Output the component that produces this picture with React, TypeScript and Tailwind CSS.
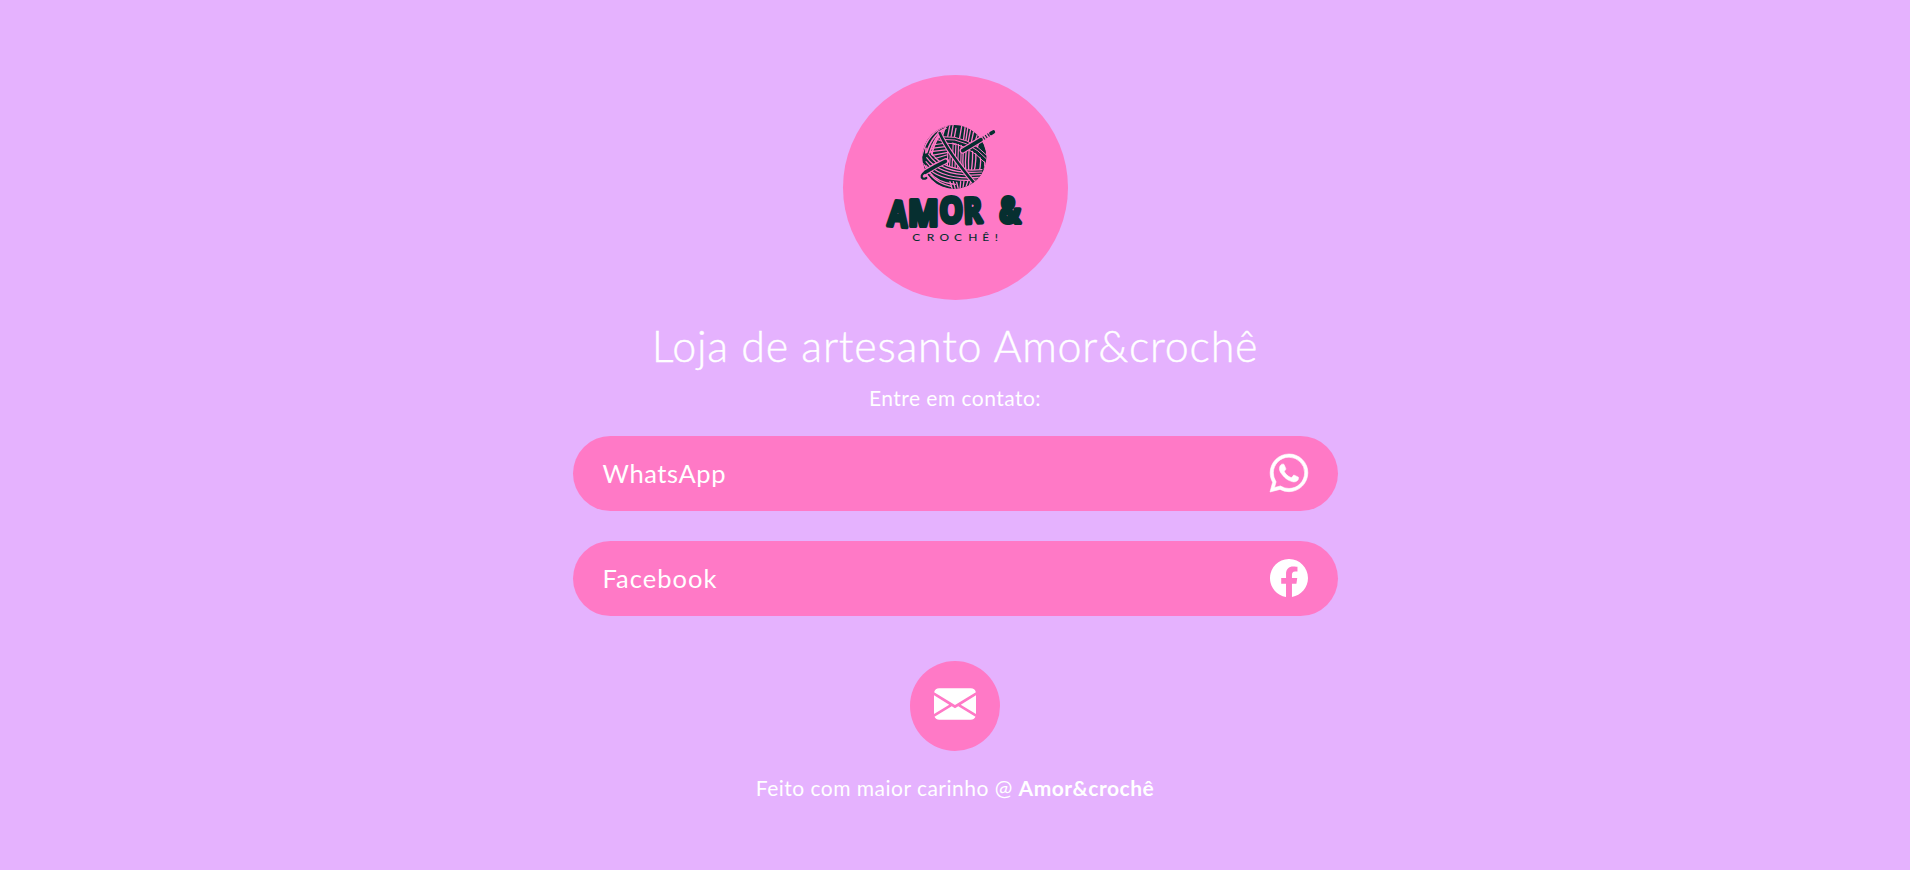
import React from "react";
import { BsEnvelopeFill, BsFacebook, BsWhatsapp } from "react-icons/bs";

const INK = "#062f30";
const PINK = "#ff79c6";

function Strands({ paths, color, width }: { paths: string[]; color: string; width: number }) {
  return (
    <g fill="none" stroke={color} strokeWidth={width} strokeLinecap="round">
      {paths.map((d) => (
        <path key={d} d={d} />
      ))}
    </g>
  );
}

function Logo() {
  return (
    <svg className="block size-[225px]" viewBox="0 0 225 225">
      <defs>
        <clipPath id="ball">
          <circle cx="163" cy="126" r="96" />
        </clipPath>
      </defs>
      <g transform="translate(57 40) scale(0.33333)">
        <g clipPath="url(#ball)">
          <circle cx="163" cy="126" r="97" fill={INK} />
          {/* vertical strands, top */}
          <Strands
            color={PINK}
            width={4}
            paths={[
              "M138 30 L128 62", "M150 28 L142 70", "M160 26 L152 72", "M186 28 L178 74",
              "M196 32 L190 78", "M204 34 L197 80", "M213 38 L204 82", "M222 44 L213 86",
              "M234 52 L222 90", "M244 62 L232 96", "M168 40 L162 72",
            ]}
          />
          {/* outer wraps, left */}
          <Strands
            color={PINK}
            width={5}
            paths={[
              "M142 32 Q84 48 66 120", "M138 40 Q92 58 74 134", "M130 48 Q98 68 80 146",
              "M122 58 Q98 84 90 150", "M66 90 Q60 140 90 176", "M78 100 Q74 140 98 166",
            ]}
          />
          {/* inner left fans */}
          <Strands
            color={PINK}
            width={3.5}
            paths={[
              "M96 90 L140 84", "M94 100 L142 94", "M92 110 L144 104", "M92 122 L144 112",
              "M94 134 L140 120", "M106 72 L132 80", "M112 64 L130 72",
            ]}
          />
          {/* centre strands */}
          <Strands
            color={PINK}
            width={3.5}
            paths={[
              "M144 92 L142 158", "M152 102 L148 162", "M160 74 L156 164", "M168 78 L165 160",
              "M176 78 L173 158", "M184 78 L182 162", "M148 72 L164 88",
            ]}
          />
          {/* right strands */}
          <Strands
            color={PINK}
            width={4}
            paths={[
              "M190 104 Q186 140 192 178", "M199 98 Q194 142 198 184", "M208 94 Q204 140 206 180",
              "M217 92 Q220 130 213 176", "M225 96 Q232 130 221 176",
              "M236 106 Q248 136 236 176", "M250 124 Q258 144 252 168",
            ]}
          />
          {/* upper right band */}
          <Strands color={INK} width={17} paths={["M130 74 Q200 68 262 136"]} />
          <Strands
            color={PINK}
            width={3}
            paths={["M128 65 Q204 60 266 126", "M130 73 Q202 68 264 136", "M134 84 Q196 80 258 146"]}
          />
          {/* lower wraps */}
          <Strands color={INK} width={34} paths={["M82 132 Q132 192 244 180"]} />
          <Strands
            color={PINK}
            width={3.5}
            paths={[
              "M92 110 Q130 174 246 164", "M86 118 Q128 181 246 171", "M80 128 Q124 188 244 179",
              "M78 140 Q122 197 240 187", "M78 152 Q118 204 234 195", "M84 166 Q112 204 166 208",
              "M92 180 Q116 206 152 214",
            ]}
          />
          {/* bottom strands */}
          <Strands
            color={PINK}
            width={4}
            paths={[
              "M150 200 L158 226", "M160 200 L167 226", "M170 202 L176 226", "M182 200 L180 226",
              "M192 198 L188 224", "M204 196 L196 222", "M214 194 L206 218",
            ]}
          />
          <Strands color={PINK} width={14} paths={["M119 54 Q144 112 224 206"]} />
          <Strands color={INK} width={7.5} paths={["M119 54 Q144 112 224 206"]} />
        </g>
        {/* crochet hook */}
        <Strands color={PINK} width={18} paths={["M188 107 L252 68", "M138 138 Q104 152 76 172"]} />
        <Strands color={INK} width={11} paths={["M188 107 L243 74", "M273 55 L280 51"]} />
        <g fill="none" stroke={INK} strokeWidth={11}>
          <path d="M250 70 L253 68 M257 65.500 L260 63.500 M264 61 L267 59" />
        </g>
        <Strands color={INK} width={11} paths={["M136 139 Q104 154 76 172"]} />
        <Strands color={INK} width={6.5} paths={["M76 171 Q58 182 69 191 Q74 192 79 189"]} />
      </g>
      <g
        fill={INK}
        stroke={INK}
        strokeWidth="4.2"
        strokeLinejoin="round"
        fontFamily="'Open Sans', sans-serif"
        fontWeight="700"
        fontSize="35"
      >
        <text transform="translate(44.5 150.5) scale(0.8 1) rotate(4)">A</text>
        <text transform="translate(65 150.5) scale(0.93 1)">M</text>
        <text transform="translate(96.5 148) scale(0.84 1)">O</text>
        <text transform="translate(121 148.5) scale(0.8 1) rotate(-3)">R</text>
        <text transform="translate(156.5 148) scale(0.8 1)">&amp;</text>
      </g>
      <text
        transform="scale(1.15 1)"
        x="60.3 72.8 84 96.6 109 121.200 132"
        y="165.8"
        fill={INK}
        fontFamily="Lato, sans-serif"
        fontSize="10.4"
        fontWeight="500"
      >
        CROCHÊ!
      </text>
    </svg>
  );
}

function LinkPill({ children, icon }: { children: React.ReactNode; icon: React.ReactNode }) {
  return (
    <a
      href="#"
      className="flex h-[75px] w-full items-center justify-between rounded-full bg-[#ff79c6] px-[30px] text-[25.5px]"
    >
      {children}
      {icon}
    </a>
  );
}

export default function App() {
  return (
    <main className="flex h-[870px] flex-col items-center bg-[#e5b2fe] pt-[75px] font-[Lato,sans-serif] text-white">
      <div className="size-[225px] shrink-0 rounded-full bg-[#ff79c6]">
        <Logo />
      </div>
      <h1 className="mt-[19px] text-[43px] leading-[54px] font-light tracking-[0.76px] whitespace-nowrap [-webkit-text-stroke:0.4px_white]">
        Loja de artesanto Amor&amp;crochê
      </h1>
      <p className="mt-[9px] text-[21px] leading-[32px] tracking-[0.47px]">Entre em contato:</p>
      <nav className="mt-[22px] flex w-[765px] flex-col gap-[30px]">
        <LinkPill icon={<BsWhatsapp strokeWidth={0.25} className="mb-[1px] size-[38px] overflow-visible stroke-white" />}>
          <span className="tracking-[0.6px]">WhatsApp</span>
        </LinkPill>
        <LinkPill icon={<BsFacebook className="mb-[1px] size-[38px]" />}>
          <span className="tracking-[1px]">Facebook</span>
        </LinkPill>
      </nav>
      <a
        href="#"
        aria-label="E-mail"
        className="mt-[45px] flex size-[90px] shrink-0 items-center justify-center rounded-full bg-[#ff79c6] pb-1"
      >
        <BsEnvelopeFill className="size-[42px]" />
      </a>
      <footer className="mt-[21px] text-[21px] leading-[32px] tracking-[0.48px] whitespace-nowrap">
        Feito com maior carinho @ <b className="tracking-[0.5px]">Amor&amp;crochê</b>
      </footer>
    </main>
  );
}
